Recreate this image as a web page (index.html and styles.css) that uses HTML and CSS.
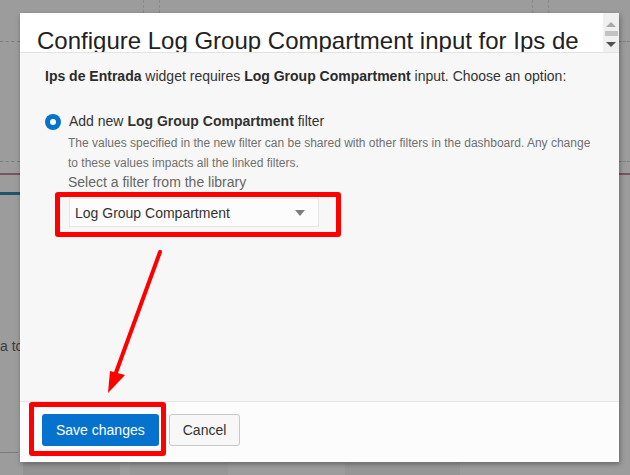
FILE: index.html
```html
<!DOCTYPE html>
<html>
<head>
<meta charset="utf-8">
<link rel="stylesheet" href="styles.css">
</head>
<body>
<div class="backdrop">
  <div class="bg-dash bg-dash-h l41"></div>
  <div class="bg-dash bg-dash-h r41"></div>
  <div class="bg-dash bg-dash-v v143"></div>
  <div class="bg-dash bg-dash-v v159"></div>
  <div class="bg-dash bg-dash-v v532"></div>
  <div class="bg-dash bg-dash-v v548"></div>
  <div class="bg-dash bg-dash-h l161"></div>
  <div class="bg-dash bg-dash-h r161"></div>
  <div class="bg-line red-l"></div>
  <div class="bg-line red-r"></div>
  <div class="bg-line teal-l"></div>
  <div class="bg-line grey-l"></div>
  <div class="bg-tile t1"></div>
  <div class="bg-tile t2"></div>
  <div class="bg-tile t3"></div>
  <span class="bg-text">a to</span>
</div>

<div class="dialog">
  <div class="dlg-header">
    <h1 class="dlg-title">Configure Log Group Compartment input for Ips de</h1>
    <div class="scrollbar">
      <span class="sb-up"></span>
      <span class="sb-thumb"></span>
      <span class="sb-down"></span>
    </div>
  </div>
  <div class="dlg-body">
    <p class="intro"><b>Ips de Entrada</b> widget requires <b>Log Group Compartment</b> input. Choose an option:</p>
    <div class="option">
      <span class="radio"><span class="radio-dot"></span></span>
      <div class="option-main">
        <div class="option-label">Add new <b>Log Group Compartment</b> filter</div>
        <p class="option-desc">The values specified in the new filter can be shared with other filters in the dashboard. Any change to these values impacts all the linked filters.</p>
        <div class="select-label">Select a filter from the library</div>
        <div class="select">
          <span class="select-value">Log Group Compartment</span>
          <span class="caret"></span>
        </div>
      </div>
    </div>
  </div>
  <div class="dlg-footer">
    <button class="btn btn-primary">Save changes</button>
    <button class="btn btn-secondary">Cancel</button>
  </div>
</div>

<div class="mark mark-select"></div>
<div class="mark mark-save"></div>
<svg class="arrow" width="630" height="475" viewBox="0 0 630 475">
  <line x1="160" y1="252" x2="114" y2="378" stroke="#ff0000" stroke-width="4" stroke-linecap="round"/>
  <polygon points="108,393 110,371 125,375" fill="#ff0000"/>
</svg>
</body>
</html>
```

FILE: styles.css
```css
html, body {
  margin: 0;
  padding: 0;
}
body {
  width: 630px;
  height: 475px;
  overflow: hidden;
  position: relative;
  background: #9c9c9c;
  font-family: "Liberation Sans", Arial, sans-serif;
  color: #333;
}

/* backdrop decorations */
.backdrop {
  position: absolute;
  inset: 0;
}
.bg-dash {
  position: absolute;
}
.bg-dash-h {
  height: 0;
  border-top: 1px dashed #7e7e7e;
}
.bg-dash-v {
  width: 0;
  top: 0;
  height: 13px;
  border-left: 1px dashed #8a8a8a;
}
.l41 { left: 0; width: 20px; top: 41px; }
.r41 { left: 619px; width: 11px; top: 41px; }
.l161 { left: 0; width: 20px; top: 161px; }
.r161 { left: 619px; width: 11px; top: 161px; }
.v143 { left: 143px; }
.v159 { left: 159px; }
.v532 { left: 532px; }
.v548 { left: 548px; }
.bg-line {
  position: absolute;
  height: 2px;
}
.red-l { left: 0; width: 20px; top: 173px; background: #7a5360; }
.red-r { left: 619px; width: 11px; top: 173px; background: #7a5360; }
.teal-l { left: 0; width: 20px; top: 192px; height: 3px; background: #1f5568; }
.grey-l { left: 0; width: 18px; top: 452px; height: 1px; background: #7a7a7a; }
.bg-tile {
  position: absolute;
  top: 463px;
  height: 12px;
}
.t1 { left: 23px; width: 97px; background: #939393; }
.t2 { left: 130px; width: 98px; background: #979797; }
.t3 { left: 345px; width: 115px; background: #969696; }
.bg-text {
  position: absolute;
  left: 0;
  top: 338px;
  font-size: 14px;
  color: #3c3c3c;
}

/* dialog */
.dialog {
  position: absolute;
  left: 20px;
  top: 13px;
  width: 599px;
  height: 449px;
  display: flex;
  flex-direction: column;
  background: #f7f7f7;
  box-shadow: 1px 2px 5px rgba(0, 0, 0, 0.35);
}
.dlg-header {
  height: 39px;
  flex: none;
  background: #fff;
  border-bottom: 1px solid #e3e3e3;
  display: flex;
  overflow: hidden;
}
.dlg-title {
  flex: 1;
  margin: 0;
  padding: 15px 0 0 17px;
  font-size: 24px;
  font-weight: normal;
  line-height: 25px;
  color: #222;
  white-space: nowrap;
}
.scrollbar {
  width: 16px;
  flex: none;
  background: #f0f0f0;
  display: flex;
  flex-direction: column;
  align-items: center;
}
.sb-up {
  margin-top: 9px;
  width: 0;
  height: 0;
  border-left: 5px solid transparent;
  border-right: 5px solid transparent;
  border-bottom: 5px solid #a9a9a9;
}
.sb-thumb {
  margin-top: 4px;
  width: 13px;
  height: 5px;
  background: #c2c2c2;
}
.sb-down {
  margin-top: 6px;
  width: 0;
  height: 0;
  border-left: 5px solid transparent;
  border-right: 5px solid transparent;
  border-top: 5px solid #505050;
}

.dlg-body {
  flex: 1;
  padding: 15px 20px 0 25px;
}
.intro {
  margin: 0;
  font-size: 14px;
  line-height: 16px;
  color: #333;
}
.intro b {
  color: #2b2b2b;
}
.option {
  display: flex;
  margin-top: 28px;
}
.radio {
  flex: none;
  width: 16px;
  height: 16px;
  margin-top: 2px;
  margin-right: 8px;
  border-radius: 50%;
  background: #0572ce;
  display: flex;
  align-items: center;
  justify-content: center;
}
.radio-dot {
  width: 6px;
  height: 6px;
  border-radius: 50%;
  background: #fff;
}
.option-main {
  flex: 1;
  margin-left: -1px;
}
.option-label {
  font-size: 14px;
  line-height: 18px;
  color: #333;
  margin-left: 1px;
}
.option-desc {
  margin: 3px 0 0;
  font-size: 12px;
  line-height: 20px;
  color: #707070;
}
.select-label {
  font-size: 14px;
  line-height: 18px;
  color: #666;
}
.select {
  margin-top: 7px;
  margin-left: 1px;
  width: 250px;
  height: 29px;
  box-sizing: border-box;
  border: 1px solid #e6e6e6;
  background: #fcfcfc;
  display: flex;
  align-items: center;
  padding: 0 13px 0 5px;
}
.select-value {
  flex: 1;
  font-size: 14px;
  color: #333;
}
.caret {
  width: 0;
  height: 0;
  border-left: 5px solid transparent;
  border-right: 5px solid transparent;
  border-top: 6px solid #7d7d7d;
}

.dlg-footer {
  height: 61px;
  flex: none;
  box-sizing: border-box;
  background: #fcfcfc;
  border-top: 1px solid #e4e4e4;
  padding: 12px 0 0 22px;
  display: flex;
  align-items: flex-start;
  gap: 10px;
}
.btn {
  height: 32px;
  padding: 0 14px;
  font-family: "Liberation Sans", Arial, sans-serif;
  font-size: 14px;
  border-radius: 3px;
  cursor: pointer;
}
.btn-primary {
  background: #0572ce;
  color: #fff;
  border: none;
}
.btn-secondary {
  background: #f7f7f7;
  color: #333;
  border: 1px solid #c8c8c8;
  padding: 0 13px;
}

/* annotations */
.mark {
  position: absolute;
  box-sizing: border-box;
  border: 5px solid #ff0000;
  border-radius: 3px;
}
.mark-select {
  left: 55px;
  top: 192px;
  width: 286px;
  height: 45px;
}
.mark-save {
  left: 29px;
  top: 402px;
  width: 137px;
  height: 54px;
}
.arrow {
  position: absolute;
  left: 0;
  top: 0;
  pointer-events: none;
}
```
